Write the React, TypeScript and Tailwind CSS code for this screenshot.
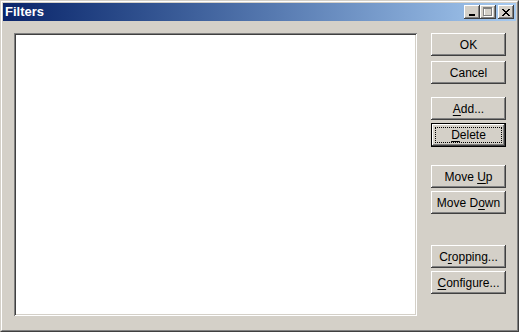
import React from "react";

const font = { fontFamily: '"Liberation Sans", Arial, sans-serif' };

const raised = "inset -1px -1px #404040, inset 1px 1px #ffffff, inset -2px -2px #808080, inset 2px 2px #d4d0c8";

function CaptionButton({ children, ml = "" }: { children: React.ReactNode; ml?: string }) {
  return (
    <div
      className={`flex h-[14px] w-[16px] items-center justify-center bg-[#d4d0c8] ${ml}`}
      style={{ boxShadow: raised }}
    >
      {children}
    </div>
  );
}

// u = index of the mnemonic letter, -1 for none
function Btn({ label, u, isDefault = false }: { label: string; u: number; isDefault?: boolean }) {
  const text =
    u < 0 ? (
      <span>{label}</span>
    ) : (
      <span>
        {label.slice(0, u)}
        <span className="underline underline-offset-[2px]">{label[u]}</span>
        {label.slice(u + 1)}
      </span>
    );
  if (isDefault) {
    return (
      <div className="h-[24px] w-[75px] border border-black">
        <div
          className="flex h-full w-full items-center justify-center bg-[#d4d0c8] p-[3px]"
          style={{ boxShadow: "inset -1px -1px #404040, inset 1px 1px #ffffff, inset -2px -2px #808080" }}
        >
          <div className="flex h-full w-full items-center justify-center border border-dotted border-black text-[12px] text-black">
            {text}
          </div>
        </div>
      </div>
    );
  }
  return (
    <div
      className="flex h-[23px] w-[75px] items-center justify-center bg-[#d4d0c8] text-[12px] text-black"
      style={{ boxShadow: raised }}
    >
      {text}
    </div>
  );
}

export default function App() {
  return (
    <div className="h-[332px] w-[519px] bg-[#d4d0c8]" style={font}>
      <div className="h-full w-full border border-t-[#d4d0c8] border-l-[#d4d0c8] border-b-[#404040] border-r-[#404040]">
        <div className="flex h-full w-full flex-col border border-t-white border-l-white border-b-[#808080] border-r-[#808080] p-px">
          {/* title bar */}
          <div className="flex h-[18px] items-center bg-gradient-to-r from-[#0a246a] to-[#a6caf0] pl-[2px] pr-[2px]">
            <span className="flex-1 text-[13px] font-bold text-white">Filters</span>
            <CaptionButton>
              <div className="mt-[6px] -ml-[1px] h-[2px] w-[6px] bg-black" />
            </CaptionButton>
            <CaptionButton>
              <svg width="10" height="10" viewBox="0 0 10 10" className="-ml-[1px]">
                <rect x="1.5" y="1.5" width="8" height="8" fill="none" stroke="#ffffff" />
                <rect x="0.5" y="0.5" width="8" height="8" fill="none" stroke="#808080" />
                <rect x="0" y="0" width="9" height="2" fill="#808080" />
              </svg>
            </CaptionButton>
            <CaptionButton ml="ml-[2px]">
              <svg width="8" height="7" viewBox="0 0 8 7" className="-ml-[1px]" shapeRendering="crispEdges">
                <path d="M0 0h2v1h-2zM6 0h2v1h-2zM1 1h2v1h-2zM5 1h2v1h-2zM2 2h4v1h-4zM3 3h2v1h-2zM2 4h4v1h-4zM1 5h2v1h-2zM5 5h2v1h-2zM0 6h2v1h-2zM6 6h2v1h-2z" fill="#000" />
              </svg>
            </CaptionButton>
          </div>

          {/* body */}
          <div className="flex flex-1 pl-[11px] pt-[12px]">
            <div
              className="h-[283px] w-[403px] bg-white"
              style={{ boxShadow: "inset 1px 1px #808080, inset -1px -1px #ffffff, inset 2px 2px #404040, inset -2px -2px #d4d0c8" }}
            />
            <div className="ml-[14px] flex flex-col">
              <Btn label="OK" u={-1} />
              <div className="mt-[5px]"><Btn label="Cancel" u={-1} /></div>
              <div className="mt-[13px]"><Btn label="Add..." u={0} /></div>
              <div className="mt-[3px]"><Btn label="Delete" u={0} isDefault /></div>
              <div className="mt-[18px]"><Btn label="Move Up" u={5} /></div>
              <div className="mt-[3px]"><Btn label="Move Down" u={6} /></div>
              <div className="mt-[31px]"><Btn label="Cropping..." u={1} /></div>
              <div className="mt-[3px]"><Btn label="Configure..." u={0} /></div>
            </div>
          </div>
        </div>
      </div>
    </div>
  );
}
